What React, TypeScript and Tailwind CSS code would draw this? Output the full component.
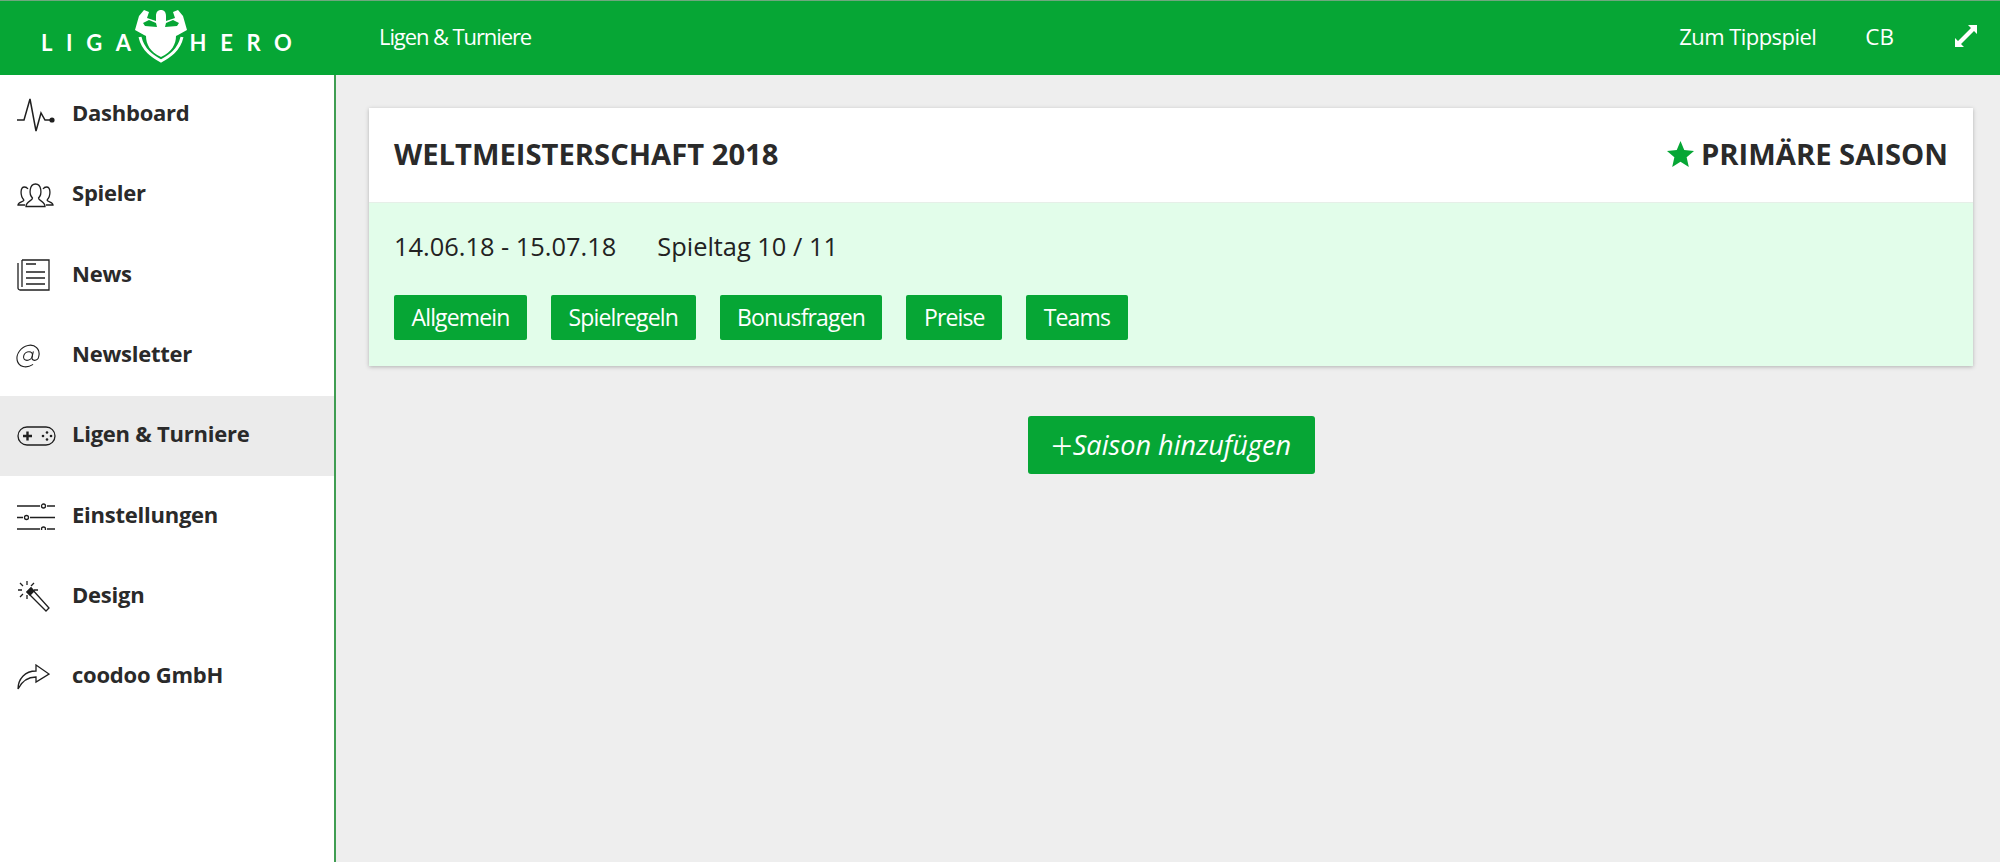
import { AtSign } from "lucide-react";
import type { ReactNode } from "react";

const Svg = ({ w, h, children }: { w: number; h: number; children: ReactNode }) => (
  <svg
    width={w}
    height={h}
    viewBox={`0 0 ${w} ${h}`}
    fill="none"
    stroke="#1f1f1f"
    strokeWidth="1.3"
  >
    {children}
  </svg>
);

const navItems: { label: string; icon: ReactNode; active?: boolean }[] = [
  {
    label: "Dashboard",
    icon: (
      <Svg w={38} h={34}>
        <path d="M0 22H7L13 1L19 33L24 15L28 22H35" strokeWidth="1.5" />
        <circle cx="35" cy="22" r="2.6" fill="#1f1f1f" stroke="none" />
      </Svg>
    ),
  },
  {
    label: "Spieler",
    icon: (
      <Svg w={37} h={25}>
        <path d="M15.5 15C11.5 11 12.5 1 18.5 1C24.5 1 25.5 11 21.5 15C21.5 18 28 18 28 23.5H9C9 18 15.5 18 15.5 15Z" />
        <path d="M7 17C3 13 3 4 7.5 4C9 4 10 4.5 11 6" />
        <path d="M7 17C7 19 1 19 1 22H8" />
        <path d="M30 17C34 13 34 4 29.5 4C28 4 27 4.5 26 6" />
        <path d="M30 17C30 19 36 19 36 22H29" />
      </Svg>
    ),
  },
  {
    label: "News",
    icon: (
      <Svg w={33} h={33}>
        <path d="M5 1H32V31H3C2 31 1 30 1 29V4" />
        <path d="M5 1V28" />
        <path d="M9 5H19M9 13H28M9 19H28M9 25H28" />
      </Svg>
    ),
  },
  {
    label: "Newsletter",
    icon: <AtSign size={26} strokeWidth={1} color="#1f1f1f" className="-ml-[2px] -skew-x-12" />,
  },
  {
    label: "Ligen & Turniere",
    active: true,
    icon: (
      <Svg w={39} h={20}>
        <rect x="1" y="1" width="37" height="18" rx="9" />
        <path d="M6 10H15M10.5 5.5V14.5" strokeWidth="2.4" />
        <circle cx="30" cy="6.5" r="1.3" fill="#1f1f1f" stroke="none" />
        <circle cx="30" cy="13.5" r="1.3" fill="#1f1f1f" stroke="none" />
        <circle cx="26" cy="10" r="1.3" fill="#1f1f1f" stroke="none" />
        <circle cx="34" cy="10" r="1.3" fill="#1f1f1f" stroke="none" />
      </Svg>
    ),
  },
  {
    label: "Einstellungen",
    icon: (
      <Svg w={38} h={27}>
        <path d="M0 3H23M30 3H38M0 14.5H6M13 14.5H38M0 26H23M30 26H38" />
        <circle cx="26.5" cy="3" r="2" />
        <circle cx="9.5" cy="14.5" r="2" />
        <circle cx="26.5" cy="26" r="2" />
      </Svg>
    ),
  },
  {
    label: "Design",
    icon: (
      <Svg w={33} h={33}>
        <path d="M10 12L14 8L32 28L29 31Z" />
        <path d="M10 12L14 8L17 11L13 15Z" fill="#1f1f1f" />
        <path d="M10 1V5M1 10H5M3 3L6 6M3 17L6 14M17 3L14 6M10 15V19M17 10H21" />
      </Svg>
    ),
  },
  {
    label: "coodoo GmbH",
    icon: (
      <Svg w={33} h={26}>
        <path d="M19 1L32 10L19 18V13C11 13 5 17 1 25C1 15 8 7 19 7Z" />
      </Svg>
    ),
  },
];

const tabs = ["Allgemein", "Spielregeln", "Bonusfragen", "Preise", "Teams"];

function Logo() {
  return (
    <div className="flex w-[336px] items-center pl-[41px] font-['Lato',sans-serif] text-[22px] font-bold tracking-[0.62em] text-white">
      <span className="mt-[8px]">LIGA</span>
      <svg width="54" height="56" viewBox="0 0 54 56" className="-ml-[11px] mb-[4px] shrink-0">
        <path
          d="M1 22L5 8L10 2L15 4L13 10L22 13L22 8C22 4 24 2 27 2C30 2 32 4 32 8L32 13L41 10L39 4L44 2L49 8L53 22L44 27L42 28C42 36 38 44 27 49C16 44 12 36 12 28L10 27Z"
          fill="#fff"
        />
        <path d="M9 15L15 12L22 15L23 19L11 18Z" fill="#06a635" />
        <path d="M45 15L39 12L32 15L31 19L43 18Z" fill="#06a635" />
        <path
          d="M6 29C9 42 18 48 27 53C36 48 45 42 48 29"
          fill="none"
          stroke="#fff"
          strokeWidth="3"
        />
      </svg>
      <span className="mt-[8px] ml-[2px]">HERO</span>
    </div>
  );
}

export default function App() {
  return (
    <div className="flex min-h-screen flex-col bg-[#eeeeee] font-['Open_Sans',sans-serif] text-[#2a2a2a]">
      <header className="flex h-[75px] items-center border-t border-t-[#6fa77e] bg-[#06a635] text-[22px] text-white">
        <Logo />
        <span className="mb-[3px] ml-[43px] tracking-[-0.05em]">Ligen &amp; Turniere</span>
        <div className="mb-[3px] ml-auto flex items-center pr-[23px]">
          <span className="tracking-[-0.025em]">Zum Tippspiel</span>
          <span className="ml-[49px] text-[22.5px]">CB</span>
          <svg width="22" height="22" viewBox="0 0 22 22" className="mb-[2px] ml-[61px]" fill="#fff" stroke="none">
            <path d="M13 0H22V9L19 6L6 19L9 22H0V13L3 16L16 3Z" />
          </svg>
        </div>
      </header>
      <div className="flex flex-1">
        <aside className="w-[336px] shrink-0 border-r-2 border-r-[#3f9d52] bg-white">
          {navItems.map((item) => (
            <div
              key={item.label}
              className={`flex h-[80.3px] items-center ${item.active ? "bg-[#ebebeb]" : ""}`}
            >
              <div className="flex w-[72px] pl-[17px]">{item.icon}</div>
              <span className="pb-[5px] text-[22px] font-bold tracking-[-0.011em]">{item.label}</span>
            </div>
          ))}
        </aside>
        <main className="flex-1 pt-[33px] pr-[27px] pl-[33px]">
          <section className="bg-white shadow-[0_1px_4px_rgba(0,0,0,0.25)]">
            <div className="flex h-[95px] items-center justify-between border-b border-b-[#e6efe8] px-[25px] text-[29.2px] font-bold">
              <h1>WELTMEISTERSCHAFT 2018</h1>
              <div className="flex items-center gap-[7px]">
                <svg width="27" height="26" viewBox="0 0 26 25" fill="#06a635" className="mb-[2px]">
                  <path d="M13 0L16.6 8.6L26 9.5L18.9 15.6L21 25L13 20L5 25L7.1 15.6L0 9.5L9.4 8.6Z" />
                </svg>
                <span>PRIMÄRE SAISON</span>
              </div>
            </div>
            <div className="h-[163px] bg-[#e2fdea] px-[25px] pt-[24px]">
              <div className="flex gap-[41px] text-[25.4px] text-[#222222]">
                <span>14.06.18 - 15.07.18</span>
                <span>Spieltag 10 / 11</span>
              </div>
              <div className="mt-[30px] flex gap-[24px]">
                {tabs.map((tab) => (
                  <button
                    key={tab}
                    className="h-[45px] rounded-[2px] bg-[#06a635] px-[17.5px] text-[23px] tracking-[-0.037em] text-white"
                  >
                    {tab}
                  </button>
                ))}
              </div>
            </div>
          </section>
          <div className="mt-[50px] flex justify-center">
            <button className="flex h-[58px] w-[287px] items-center justify-center rounded-[3px] bg-[#06a635] text-[27.1px] text-white italic">
              <span className="text-[38px] leading-none font-light not-italic">+</span>
              Saison hinzufügen
            </button>
          </div>
        </main>
      </div>
    </div>
  );
}
